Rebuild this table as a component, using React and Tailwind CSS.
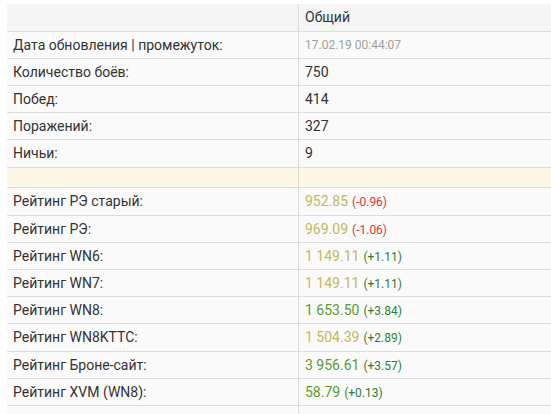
import React from 'react';

const rows = [
  { label: 'Дата обновления | промежуток:', date: '17.02.19 00:44:07' },
  { label: 'Количество боёв:', value: '750' },
  { label: 'Побед:', value: '414' },
  { label: 'Поражений:', value: '327' },
  { label: 'Ничьи:', value: '9', tall: true },
  { spacer: true },
  { label: 'Рейтинг РЭ старый:', rating: '952.85', tone: 'yellow', delta: '(-0.96)', up: false, tall: true },
  { label: 'Рейтинг РЭ:', rating: '969.09', tone: 'yellow', delta: '(-1.06)', up: false },
  { label: 'Рейтинг WN6:', rating: '1 149.11', tone: 'yellow', delta: '(+1.11)', up: true },
  { label: 'Рейтинг WN7:', rating: '1 149.11', tone: 'yellow', delta: '(+1.11)', up: true },
  { label: 'Рейтинг WN8:', rating: '1 653.50', tone: 'green', delta: '(+3.84)', up: true },
  { label: 'Рейтинг WN8KTTC:', rating: '1 504.39', tone: 'yellow', delta: '(+2.89)', up: true, tall: true },
  { label: 'Рейтинг Броне-сайт:', rating: '3 956.61', tone: 'green', delta: '(+3.57)', up: true },
  { label: 'Рейтинг XVM (WN8):', rating: '58.79', tone: 'green', delta: '(+0.13)', up: true },
  { empty: true },
];

const Row = ({ row }) => {
  if (row.spacer) {
    return (
      <div className="grid grid-cols-[291px_1fr] h-[20px] bg-[#fdf8e4] border-b border-[#dddddd]">
        <div />
        <div className="border-l border-[#dddddd]" />
      </div>
    );
  }
  if (row.empty) {
    return (
      <div className="grid grid-cols-[291px_1fr] h-[27px] border-b border-[#dddddd]">
        <div />
        <div className="border-l border-[#dddddd]" />
      </div>
    );
  }
  return (
    <div className={`grid grid-cols-[291px_1fr] ${row.tall ? 'h-[28px]' : 'h-[27px]'} border-b border-[#dddddd] items-stretch`}>
      <div className="px-[6px] flex items-center text-[14px] text-[#333333]">{row.label}</div>
      <div className="px-[6px] flex items-center border-l border-[#dddddd] text-[14px] text-[#333333]">
        {row.date && <span className="text-[12px] text-[#a0a0a0]">{row.date}</span>}
        {row.value && <span>{row.value}</span>}
        {row.rating && (
          <span>
            <span className={row.tone === 'green' ? 'text-[#5a9a2e]' : 'text-[#c6b65c]'}>{row.rating}</span>
            <span className={`text-[12px] ml-[4px] ${row.up ? 'text-[#2f7d34]' : 'text-[#e0303a]'}`}>{row.delta}</span>
          </span>
        )}
      </div>
    </div>
  );
};

export default function App() {
  return (
    <div className="w-[551px] h-[414px] bg-white overflow-hidden pt-[4px] pl-[7px]" style={{ fontFamily: 'Roboto, "Liberation Sans", sans-serif' }}>
      <div className="bg-[#fafafa]">
        <div className="grid grid-cols-[291px_1fr] h-[28px] bg-[#f5f5f5] border-b border-[#dddddd]">
          <div />
          <div className="px-[6px] flex items-center border-l border-[#dddddd] text-[14px] text-[#333333]">Общий</div>
        </div>
        {rows.map((row, i) => (
          <Row key={i} row={row} />
        ))}
      </div>
    </div>
  );
}
